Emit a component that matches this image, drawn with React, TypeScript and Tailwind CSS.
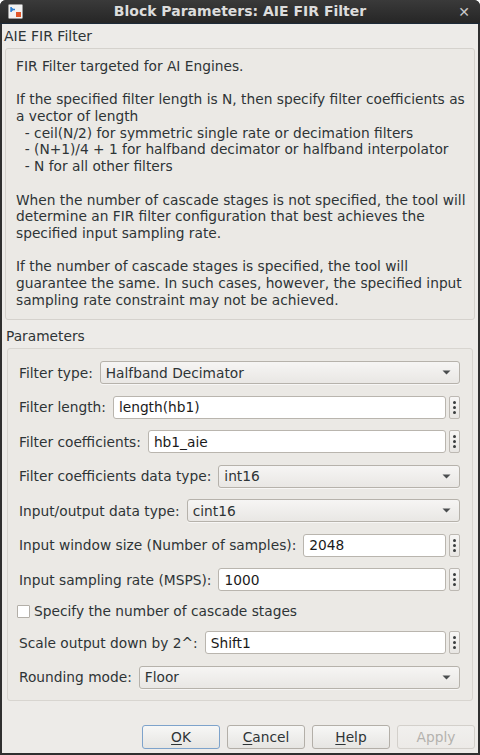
import type { ReactNode } from 'react'

const font = { fontFamily: '"DejaVu Sans", "Liberation Sans", sans-serif' }

function Dropdown({ value }: { value: string }) {
  return (
    <div className="flex-1 h-[23px] flex items-center justify-between rounded-[3px] border border-[#b6b2ab] bg-gradient-to-b from-[#f6f5f4] to-[#e9e7e4] pl-[5px] pr-[8px] shadow-[0_1px_0_rgba(255,255,255,0.6)]">
      <span>{value}</span>
      <svg width="9" height="5" viewBox="0 0 9 5">
        <path d="M0.5 0.5 L8.5 0.5 L4.5 4.5 Z" fill="#4a4d4e" />
      </svg>
    </div>
  )
}

function TextField({ value }: { value: string }) {
  return (
    <div className="flex-1 flex items-center gap-[3px]">
      <div className="flex-1 h-[23px] flex items-center rounded-[3px] border border-[#b9b5ae] bg-white pl-[5px] text-[#1a1a1a]">
        {value}
      </div>
      <div className="w-[11px] h-[23px] rounded-[2px] border border-[#bdb9b3] bg-gradient-to-b from-[#f7f6f5] to-[#e8e6e3] flex flex-col items-center justify-center gap-[2px]">
        <span className="w-[3px] h-[3px] rounded-full bg-[#3a3d3e]" />
        <span className="w-[3px] h-[3px] rounded-full bg-[#3a3d3e]" />
        <span className="w-[3px] h-[3px] rounded-full bg-[#3a3d3e]" />
      </div>
    </div>
  )
}

function Row({ label, children }: { label: string; children: ReactNode }) {
  return (
    <div className="flex items-center gap-[7px] h-[23px]">
      <span className="whitespace-nowrap">{label}</span>
      {children}
    </div>
  )
}

function Button({ children, primary, disabled }: { children: ReactNode; primary?: boolean; disabled?: boolean }) {
  return (
    <div
      className={
        'w-[78px] h-[24px] rounded-[3px] border flex items-center justify-center bg-gradient-to-b ' +
        (primary
          ? 'border-[#7ea3cb] from-[#f7f7f6] to-[#e6e5e2]'
          : disabled
            ? 'border-[#d3d0cb] from-[#f1f0ee] to-[#eceae7] text-[#b4b2ae]'
            : 'border-[#b3afa8] from-[#f7f7f6] to-[#e6e5e2]')
      }
    >
      {children}
    </div>
  )
}

const description: string[] = [
  'FIR Filter targeted for AI Engines.',
  '',
  'If the specified filter length is N, then specify filter coefficients as',
  'a vector of length',
  '  - ceil(N/2) for symmetric single rate or decimation filters',
  '  - (N+1)/4 + 1 for halfband decimator or halfband interpolator',
  '  - N for all other filters',
  '',
  'When the number of cascade stages is not specified, the tool will',
  'determine an FIR filter configuration that best achieves the',
  'specified input sampling rate.',
  '',
  'If the number of cascade stages is specified, the tool will',
  'guarantee the same. In such cases, however, the specified input',
  'sampling rate constraint may not be achieved.',
]

export default function App() {
  return (
    <div style={font} className="w-[480px] h-[755px] bg-[#2f2f2f] text-[13.75px] text-[#2e3436] flex flex-col overflow-hidden rounded-t-[6px]">
      {/* title bar */}
      <div className="h-[24px] shrink-0 flex items-center px-[8px] bg-gradient-to-b from-[#3a3a3a] to-[#262626] border-b border-[#1c2a38] relative">
        <svg width="15" height="15" viewBox="0 0 15 15" className="shrink-0">
          <rect x="0.5" y="0.5" width="14" height="14" rx="1" fill="#f2f2f2" stroke="#9a9a9a" />
          <path d="M3 3 L3 8 M3 5.5 L7 5.5" stroke="#2f7fd0" strokeWidth="1.4" />
          <path d="M3 3 L6 5.5 L3 8 Z" fill="#2f7fd0" />
          <rect x="8" y="8" width="5" height="5" fill="#e2562a" />
        </svg>
        <span className="absolute inset-x-0 text-center text-[14px] font-bold text-[#dcdcdc] pointer-events-none">
          Block Parameters: AIE FIR Filter
        </span>
        <span className="ml-auto text-[#c8c8c8] text-[14px] font-bold leading-none pr-[2px]">✕</span>
      </div>

      {/* body */}
      <div className="flex-1 mx-[2px] mb-[2px] bg-[#edebe8] flex flex-col">
        <div className="h-[22px] flex items-center pl-[2px] pt-[2px] text-[14px] text-[#2e3436]">AIE FIR Filter</div>

        <div className="mx-[3px] mt-[2px] rounded-[3px] border border-[#d5d2cd] bg-[#ebe9e5] pl-[10px] pt-[9px] pb-[11px] leading-[16.7px]">
          {description.map((line, i) => (
            <div key={i} className="whitespace-pre h-[16.7px]">
              {line}
            </div>
          ))}
        </div>

        <div className="h-[28px] flex items-end pl-[4px] pb-[2px]">Parameters</div>

        <div className="mx-[5px] rounded-[3px] border border-[#d8d5d0] bg-[#ebe9e5] pl-[11px] pr-[12px] pt-[12px] pb-[11px] flex flex-col gap-[11.5px]">
          <Row label="Filter type:">
            <Dropdown value="Halfband Decimator" />
          </Row>
          <Row label="Filter length:">
            <TextField value="length(hb1)" />
          </Row>
          <Row label="Filter coefficients:">
            <TextField value="hb1_aie" />
          </Row>
          <Row label="Filter coefficients data type:">
            <Dropdown value="int16" />
          </Row>
          <Row label="Input/output data type:">
            <Dropdown value="cint16" />
          </Row>
          <Row label="Input window size (Number of samples):">
            <TextField value="2048" />
          </Row>
          <Row label="Input sampling rate (MSPS):">
            <TextField value="1000" />
          </Row>
          <div className="h-[17px] flex items-center gap-[4px] -ml-[2px]">
            <span className="w-[13px] h-[13px] border border-[#b3afa8] bg-white rounded-[1px]" />
            <span>Specify the number of cascade stages</span>
          </div>
          <Row label="Scale output down by 2^:">
            <TextField value="Shift1" />
          </Row>
          <Row label="Rounding mode:">
            <Dropdown value="Floor" />
          </Row>
        </div>

        <div className="flex-1 flex items-end justify-end gap-[7px] pr-[3px] pb-[4px]">
          <Button primary>
            <span><span className="underline underline-offset-2">O</span>K</span>
          </Button>
          <Button>
            <span><span className="underline underline-offset-2">C</span>ancel</span>
          </Button>
          <Button>
            <span><span className="underline underline-offset-2">H</span>elp</span>
          </Button>
          <Button disabled>Apply</Button>
        </div>
      </div>
    </div>
  )
}
